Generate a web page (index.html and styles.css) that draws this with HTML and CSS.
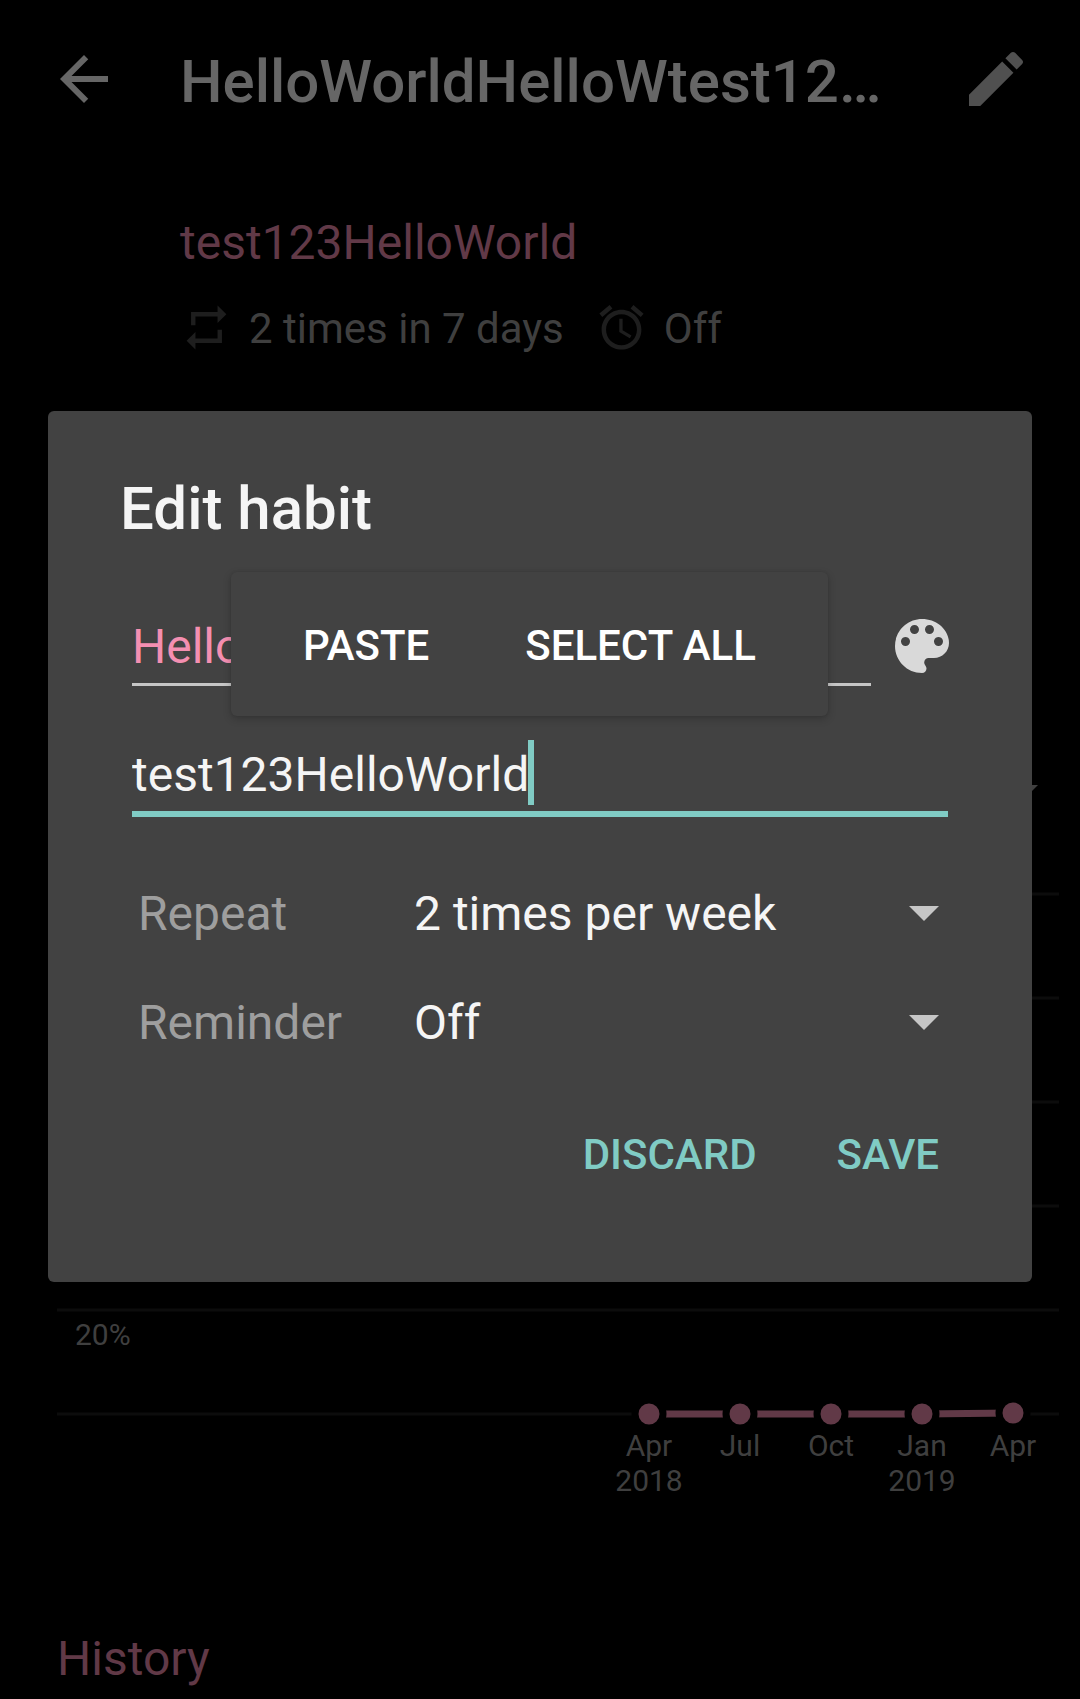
FILE: index.html
```html
<!DOCTYPE html>
<html lang="en">
<head>
<meta charset="utf-8">
<meta name="viewport" content="width=device-width, initial-scale=1">
<title>Edit habit</title>
<link rel="stylesheet" href="styles.css">
</head>
<body>
<div class="page">
  <header class="toolbar">
    <button class="icon-button" type="button" aria-label="Back">
      <svg class="icon" viewBox="0 0 24 24"><path d="M20 11H7.83l5.59-5.59L12 4l-8 8 8 8 1.41-1.41L7.83 13H20v-2z"/></svg>
    </button>
    <h1 class="toolbar-title">HelloWorldHelloWtest12…</h1>
    <button class="icon-button icon-button-dim" type="button" aria-label="Edit">
      <svg class="icon" viewBox="0 0 24 24"><path d="M3 17.25V21h3.75L17.81 9.94l-3.75-3.75L3 17.25zM20.71 7.04c.39-.39.39-1.02 0-1.41l-2.34-2.34c-.39-.39-1.02-.39-1.41 0l-1.83 1.83 3.75 3.75 1.83-1.83z"/></svg>
    </button>
  </header>

  <section class="summary">
    <p class="question">test123HelloWorld</p>
    <div class="facts">
      <span class="fact">
        <svg class="fact-icon" viewBox="0 0 24 24"><path d="M7 7h10v3l4-4-4-4v3H5v6h2V7zm10 10H7v-3l-4 4 4 4v-3h12v-6h-2v4z"/></svg>
        <span class="fact-text">2 times in 7 days</span>
      </span>
      <span class="fact">
        <svg class="fact-icon" viewBox="0 0 24 24"><path d="M22 5.72l-4.6-3.86-1.29 1.53 4.6 3.86L22 5.72zM7.88 3.39L6.6 1.86 2 5.71l1.29 1.53 4.59-3.85zM12.5 8H11v6l4.75 2.85.75-1.23-4-2.37V8zM12 4c-4.97 0-9 4.03-9 9s4.02 9 9 9c4.97 0 9-4.03 9-9s-4.03-9-9-9zm0 16c-3.87 0-7-3.13-7-7s3.13-7 7-7 7 3.13 7 7-3.13 7-7 7z"/></svg>
        <span class="fact-text">Off</span>
      </span>
    </div>
  </section>

  <section class="score">
    <button class="interval" type="button" aria-label="Chart interval">
      <svg class="arrow" viewBox="0 0 30 15"><path d="M0 0h30L15 15z"/></svg>
    </button>
    <svg class="chart" viewBox="0 0 1002 640" role="img" aria-label="Score by quarter">
      <path class="grid-line" d="M0 26h1002M0 130h1002M0 234h1002M0 338h1002M0 442h1002M0 546h1002"/>
      <text class="axis" x="18" y="477">20%</text>
      <polyline class="series" points="592,546 683,546 774,546 865,546 956,545"/>
      <g class="points">
        <circle cx="592" cy="546" r="14"/>
        <circle cx="683" cy="546" r="14"/>
        <circle cx="774" cy="546" r="14"/>
        <circle cx="865" cy="546" r="14"/>
        <circle cx="956" cy="545" r="14"/>
      </g>
      <g class="axis axis-time">
        <text x="592" y="588">Apr</text>
        <text x="592" y="623">2018</text>
        <text x="683" y="588">Jul</text>
        <text x="774" y="588">Oct</text>
        <text x="865" y="588">Jan</text>
        <text x="865" y="623">2019</text>
        <text x="956" y="588">Apr</text>
      </g>
    </svg>
  </section>

  <section class="history">
    <h2 class="section-title">History</h2>
  </section>
</div>

<div class="scrim">
  <form class="dialog" role="dialog" aria-labelledby="dialog-title">
    <h2 class="dialog-title" id="dialog-title">Edit habit</h2>

    <div class="name-row">
      <input class="field field-name" type="text" aria-label="Name" value="HelloWorldHelloW">
      <button class="icon-button palette" type="button" aria-label="Color">
        <svg class="icon" viewBox="0 0 24 24"><path d="M12 3c-4.97 0-9 4.03-9 9s4.03 9 9 9c.83 0 1.5-.67 1.5-1.5 0-.39-.15-.74-.39-1.01-.23-.26-.38-.61-.38-.99 0-.83.67-1.5 1.5-1.5H16c2.76 0 5-2.24 5-5 0-4.42-4.03-8-9-8zm-5.5 9c-.83 0-1.5-.67-1.5-1.5S5.67 9 6.5 9 8 9.67 8 10.5 7.33 12 6.5 12zm3-4C8.67 8 8 7.33 8 6.5S8.67 5 9.5 5s1.5.67 1.5 1.5S10.33 8 9.5 8zm5 0c-.83 0-1.5-.67-1.5-1.5S13.67 5 14.5 5s1.5.67 1.5 1.5S15.33 8 14.5 8zm3 4c-.83 0-1.5-.67-1.5-1.5S16.67 9 17.5 9s1.5.67 1.5 1.5-.67 1.5-1.5 1.5z"/></svg>
      </button>
    </div>

    <div class="question-row">
      <input class="field field-question" type="text" aria-label="Question" value="test123HelloWorld">
    </div>

    <div class="options">
      <label class="option-label" for="repeat">Repeat</label>
      <div class="picker">
        <select class="picker-select" id="repeat"><option>2 times per week</option></select>
        <svg class="arrow picker-arrow" viewBox="0 0 30 15"><path d="M0 0h30L15 15z"/></svg>
      </div>
      <label class="option-label" for="reminder">Reminder</label>
      <div class="picker">
        <select class="picker-select" id="reminder"><option>Off</option></select>
        <svg class="arrow picker-arrow" viewBox="0 0 30 15"><path d="M0 0h30L15 15z"/></svg>
      </div>
    </div>

    <div class="actions">
      <button class="action" type="button">DISCARD</button>
      <button class="action" type="submit">SAVE</button>
    </div>

    <div class="edit-menu">
      <button class="edit-item" type="button">PASTE</button>
      <button class="edit-item" type="button">SELECT ALL</button>
    </div>
  </form>
</div>
</body>
</html>
```
FILE: styles.css
```css
* {
  box-sizing: border-box;
}

body {
  margin: 0;
  background: #000;
  color: #3f3f3f;
  font-family: Roboto, "Liberation Sans", sans-serif;
}

h1,
h2,
p {
  margin: 0;
  font-weight: 400;
}

button,
input,
select {
  margin: 0;
  padding: 0;
  border: 0;
  border-radius: 0;
  outline: 0;
  background: none;
  color: inherit;
  font: inherit;
}

svg {
  display: block;
  fill: currentColor;
}

.page {
  min-height: 100vh;
}

.icon-button {
  flex: none;
  color: #666;
}

.icon-button-dim {
  color: #505050;
}

.icon {
  width: 72px;
  height: 72px;
}

.arrow {
  width: 30px;
  height: 15px;
}

/* Toolbar */

.toolbar {
  display: flex;
  align-items: center;
  gap: 60px;
  padding: 40px 48px;
}

.toolbar-title {
  flex: 1;
  min-width: 0;
  padding-top: 6px;
  overflow: hidden;
  color: #666;
  font-size: 60px;
  font-weight: 500;
  line-height: 72px;
  text-overflow: ellipsis;
  white-space: nowrap;
}

/* Habit summary */

.summary {
  display: grid;
  gap: 27px;
  padding: 55px 48px 0 180px;
}

.question,
.section-title {
  color: #613947;
  font-size: 48px;
  line-height: 60px;
}

.facts {
  display: flex;
  gap: 31px;
  font-size: 42px;
  line-height: 54px;
}

.fact {
  display: flex;
  align-items: center;
  gap: 16px;
  height: 54px;
}

.fact-icon {
  width: 53px;
  height: 53px;
  color: #1e1e1e;
}

.fact-text {
  padding-top: 4px;
}

/* Score chart */

.score {
  display: grid;
  gap: 52px;
  margin-top: 415px;
  padding: 0 21px 0 57px;
}

.interval {
  justify-self: end;
  padding: 16px 21px;
  color: #404040;
}

.chart {
  width: 100%;
  height: auto;
}

.grid-line {
  stroke: #0c0c0c;
  stroke-width: 3;
}

.series {
  fill: none;
  stroke: #613947;
  stroke-width: 7;
}

.points {
  fill: #613947;
  stroke: #000;
  stroke-width: 7;
}

.axis {
  font-size: 30px;
}

.axis-time {
  text-anchor: middle;
}

.history {
  padding: 121px 57px 0;
}

/* Dialog */

.scrim {
  position: fixed;
  inset: 0;
  display: grid;
  align-content: center;
  padding: 0 48px 6px;
}

.dialog {
  position: relative;
  padding: 62px 84px 74px;
  border-radius: 6px;
  background: #424242;
  color: #f5f5f5;
  font-size: 48px;
}

.dialog-title {
  margin-left: -12px;
  font-size: 60px;
  font-weight: 500;
  line-height: 72px;
}

.name-row {
  display: flex;
  gap: 15px;
  margin: 65px -10px 52px 0;
}

.field {
  height: 73px;
  line-height: 60px;
}

.field-name {
  flex: 1;
  min-width: 0;
  height: 76px;
  border-bottom: 3px solid #c6c6c6;
  color: #f48fb1;
}

.palette {
  height: 72px;
  color: #d9d9d9;
}

.question-row {
  display: flex;
  border-bottom: 6px solid #80cbc4;
}

.field-question {
  field-sizing: content;
}

/* Text cursor of the focused field */
.question-row::after {
  content: "";
  width: 6px;
  height: 65px;
  margin: 2px 0 0 -1px;
  background: #80cbc4;
}

.options {
  display: grid;
  grid-template-columns: 282px 1fr;
  grid-auto-rows: 109px;
  align-items: center;
  margin-top: 42px;
}

.option-label {
  padding-left: 6px;
  color: #9e9e9e;
}

.picker {
  display: grid;
  align-items: center;
}

.picker-select {
  grid-area: 1 / 1;
  height: 72px;
  appearance: none;
}

.picker-arrow {
  grid-area: 1 / 1;
  justify-self: end;
  margin-right: 9px;
  color: #c6c6c6;
  pointer-events: none;
}

.actions {
  display: flex;
  justify-content: flex-end;
  gap: 80px;
  margin-top: 23px;
  padding-right: 9px;
}

.action {
  height: 108px;
  color: #80cbc4;
  font-size: 42px;
  font-weight: 500;
}

/* Text selection menu floating over the form */

.edit-menu {
  position: absolute;
  top: 161px;
  left: 183px;
  display: flex;
  height: 144px;
  padding: 0 24px;
  border-radius: 6px;
  background: #424242;
  box-shadow: 0 3px 8px rgba(0, 0, 0, 0.2), 0 0 3px rgba(0, 0, 0, 0.1);
}

.edit-item {
  padding: 2px 48px 0;
  color: #fff;
  font-size: 42px;
  font-weight: 500;
  white-space: nowrap;
}
```
